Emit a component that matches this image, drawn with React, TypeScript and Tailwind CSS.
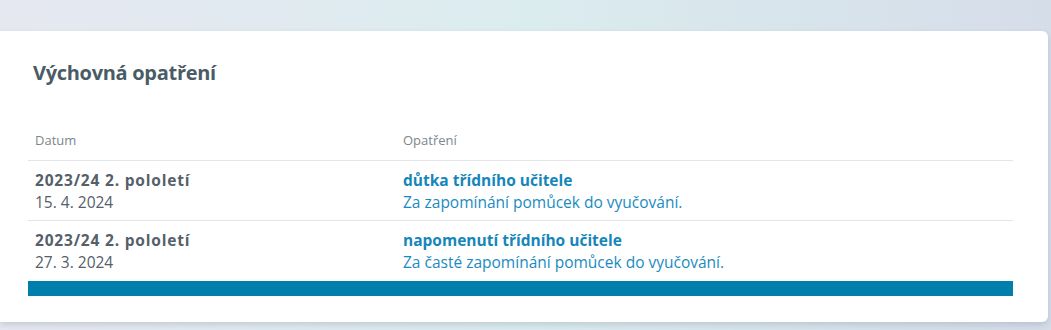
import React from "react";

interface Opatreni {
  obdobi: string;
  datum: string;
  typ: string;
  duvod: string;
}

const rows: Opatreni[] = [
  {
    obdobi: "2023/24 2. pololetí",
    datum: "15. 4. 2024",
    typ: "důtka třídního učitele",
    duvod: "Za zapomínání pomůcek do vyučování.",
  },
  {
    obdobi: "2023/24 2. pololetí",
    datum: "27. 3. 2024",
    typ: "napomenutí třídního učitele",
    duvod: "Za časté zapomínání pomůcek do vyučování.",
  },
];

const App: React.FC = () => {
  return (
    <div
      className="w-[1051px] h-[330px] overflow-hidden bg-gradient-to-r from-[#e6e8f1] via-[#dbecef] to-[#d5dde9] pt-[31px]"
      style={{ fontFamily: '"Open Sans", "Noto Sans", sans-serif' }}
    >
      <div className="w-[1048px] h-[291px] bg-white rounded-r-md shadow-[0_3px_6px_rgba(60,80,100,0.18)] pl-[28px] pr-[35px] pt-[28px]">
        {/* Title */}
        <h2 className="text-[20px] font-bold text-[#4b5b66] pl-[5px] leading-[28px] tracking-[-0.3px]">
          Výchovná opatření
        </h2>

        {/* Table */}
        <div className="mt-[35px]">
          <div className="grid grid-cols-[368px_1fr] h-[39px] items-center border-b border-[#e3e6e9] text-[13px] text-[#7d868c]">
            <div className="pl-[7px]">Datum</div>
            <div className="pl-[7px]">Opatření</div>
          </div>
          {rows.map((r, i) => (
            <div
              key={i}
              className={`grid grid-cols-[368px_1fr] h-[60px] items-center text-[15.5px] leading-[22px] ${
                i < rows.length - 1 ? "border-b border-[#e3e6e9]" : ""
              }`}
            >
              <div className="pl-[7px] text-[#55606a]">
                <div className="font-bold tracking-[0.8px]">{r.obdobi}</div>
                <div>{r.datum}</div>
              </div>
              <div className="pl-[7px] text-[#1a8bbf]">
                <div className="font-bold text-[#1586ba]">{r.typ}</div>
                <div>{r.duvod}</div>
              </div>
            </div>
          ))}
          <div className="h-[15px] bg-[#007fad]" />
        </div>
      </div>
    </div>
  );
};

export default App;
